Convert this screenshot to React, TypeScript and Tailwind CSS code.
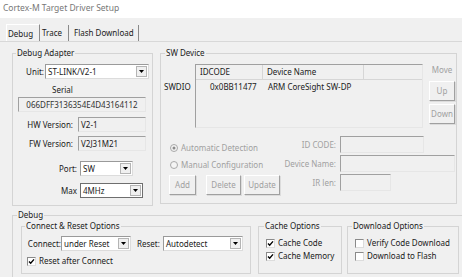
import React from 'react'

const sunken =
  'border border-t-[#a0a0a0] border-l-[#a0a0a0] border-r-[#e6e6e6] border-b-[#e6e6e6]'

function Arrow() {
  return (
    <svg width="5" height="3" viewBox="0 0 5 3">
      <path d="M0 0h5L2.5 3z" fill="#000" />
    </svg>
  )
}

function Select({ w, text, focus }: { w: string; text: string; focus?: boolean }) {
  return (
    <div
      className={`flex h-[15px] ${w} bg-white border ${
        focus
          ? 'border-[#6e6e6e]'
          : 'border-t-[#9a9a9a] border-l-[#9a9a9a] border-r-[#dcdcdc] border-b-[#dcdcdc]'
      }`}
    >
      <span className="flex-1 pl-[2px] leading-[13px] whitespace-nowrap overflow-hidden">{text}</span>
      <span className="flex items-center justify-center w-[11px] my-[1px] mr-[1px] border border-[#b4b4b4] bg-[#f0f0f0]">
        <Arrow />
      </span>
    </div>
  )
}

function Check({ on }: { on?: boolean }) {
  return (
    <span className="flex items-center justify-center w-[9px] h-[9px] bg-white border border-t-[#8a8a8a] border-l-[#8a8a8a] border-r-[#dcdcdc] border-b-[#dcdcdc]">
      {on && (
        <svg width="7" height="7" viewBox="0 0 7 7">
          <path d="M1 3.4l1.7 1.8L6 1.4" stroke="#000" strokeWidth="1.4" fill="none" />
        </svg>
      )}
    </span>
  )
}

function Radio({ on }: { on?: boolean }) {
  return (
    <svg width="8" height="8" viewBox="0 0 8 8">
      <circle cx="4" cy="4" r="3.5" fill="#f4f4f4" stroke="#a8a8a8" />
      {on && <circle cx="4" cy="4" r="1.5" fill="#8a8a8a" />}
    </svg>
  )
}

function Btn({ w, children }: { w: string; children: React.ReactNode }) {
  return (
    <div
      className={`${w} h-[20px] flex items-center justify-center text-[#a0a0a0] bg-[#f0f0f0] border border-t-white border-l-white border-r-[#a0a0a0] border-b-[#a0a0a0] shadow-[1px_1px_0_#dcdcdc]`}
    >
      {children}
    </div>
  )
}

export default function App() {
  return (
    <div className="w-[462px] h-[277px] overflow-hidden bg-[#f0f0f0] text-[8px] leading-[12px] text-[#1a1a1a] font-['Noto_Sans',sans-serif]">
      {/* title bar */}
      <div className="h-[18px] bg-white pl-[3px] pt-[2px] text-[8.5px] text-[#777]">
        Cortex-M Target Driver Setup
      </div>

      {/* tabs */}
      <div className="flex items-end h-[23px] pl-[6px]">
        <div className="h-[17px] w-[34px] pl-[1px] leading-[17px] border-t border-l border-r border-t-white border-l-white border-r-[#8a8a8a]">
          Debug
        </div>
        <div className="h-[16px] w-[29px] pl-[2px] leading-[16px] border-r border-[#8a8a8a]">Trace</div>
        <div className="h-[16px] w-[70px] pl-[5px] leading-[16px] border-r border-[#8a8a8a]">Flash Download</div>
      </div>

      <div className="border-t border-[#d8d8d8] pt-[5px] pl-[12px]">
        <div className="flex items-start">
          {/* Debug Adapter */}
          <fieldset className="w-[141px] h-[159px] border border-[#d4d4d4]">
            <legend className="ml-[3px] px-[1px]">Debug Adapter</legend>
            <div className="flex items-center h-[15px] mt-[5px]">
              <span className="w-[32px] text-right pr-[1px]">Unit:</span>
              <Select w="w-[104px]" text="ST-LINK/V2-1" />
            </div>
            <div className="mt-[5px] pl-[39px]">Serial</div>
            <div className={`mt-[1px] ml-[5px] w-[128px] h-[15px] leading-[13px] text-center text-[#333] ${sunken}`}>
              066DFF3136354E4D43164112
            </div>
            <div className="flex items-center h-[15px] mt-[5px]">
              <span className="w-[62px] text-right pr-[2px]">HW Version:</span>
              <span className={`ml-[3px] w-[68px] h-[15px] pl-[2px] leading-[13px] ${sunken}`}>V2-1</span>
            </div>
            <div className="flex items-center h-[15px] mt-[4px]">
              <span className="w-[62px] text-right pr-[2px]">FW Version:</span>
              <span className={`ml-[3px] w-[68px] h-[15px] pl-[2px] leading-[13px] ${sunken}`}>V2J31M21</span>
            </div>
            <div className="flex items-center h-[15px] mt-[10px]">
              <span className="w-[65px] text-right pr-[1px]">Port:</span>
              <span className="ml-[2px]">
                <Select w="w-[53px]" text="SW" />
              </span>
            </div>
            <div className="flex items-center h-[15px] mt-[7px]">
              <span className="w-[65px] text-right pr-[1px]">Max</span>
              <span className="ml-[2px]">
                <Select w="w-[63px]" text="4MHz" focus />
              </span>
            </div>
          </fieldset>

          {/* SW Device */}
          <fieldset className="ml-[7px] w-[297px] h-[157px] border border-[#d4d4d4]">
            <legend className="ml-[4px] px-[1px]">SW Device</legend>
            <div className="flex items-start mt-[5px]">
              <span className="w-[34px] pl-[3px] pt-[17px]">SWDIO</span>
              <div className={`w-[228px] h-[64px] bg-[#f0f0f0] ${sunken}`}>
                <div className="flex h-[15px] leading-[14px] border-b border-[#d6d6d6]">
                  <span className="w-[67px] pl-[4px] border-r border-[#d6d6d6]">IDCODE</span>
                  <span className="w-[101px] pl-[4px] border-r border-[#d6d6d6]">Device Name</span>
                </div>
                <div className="flex pt-[1px]">
                  <span className="w-[67px] pl-[14px]">0x0BB11477</span>
                  <span className="pl-[5px]">ARM CoreSight SW-DP</span>
                </div>
              </div>
              <div className="ml-[6px] w-[26px] flex flex-col items-center text-[#a0a0a0]">
                <span>Move</span>
                <div className="mt-[5px]">
                  <Btn w="w-[26px]">Up</Btn>
                </div>
                <div className="mt-[3px]">
                  <Btn w="w-[26px]">Down</Btn>
                </div>
              </div>
            </div>
            <div className="flex">
              <div className="w-[119px] text-[#a0a0a0]">
                <div className="flex items-center gap-[3px] h-[12px] mt-[14px] pl-[9px] whitespace-nowrap">
                  <Radio on />
                  Automatic Detection
                </div>
                <div className="flex items-center gap-[3px] h-[12px] mt-[5px] pl-[9px] whitespace-nowrap">
                  <Radio />
                  Manual Configuration
                </div>
                <div className="flex mt-[4px] pl-[8px]">
                  <Btn w="w-[36px]">Add</Btn>
                  <span className="ml-[10px]">
                    <Btn w="w-[35px]">Delete</Btn>
                  </span>
                  <span className="ml-[3px]">
                    <Btn w="w-[36px]">Update</Btn>
                  </span>
                </div>
              </div>
              <div className="text-[#a0a0a0] mt-[8px]">
                <div className="flex items-center h-[17px]">
                  <span className="w-[56px] text-right whitespace-nowrap">ID CODE:</span>
                  <span className={`ml-[4px] w-[84px] h-[17px] ${sunken}`} />
                </div>
                <div className="flex items-center h-[17px] mt-[2px]">
                  <span className="w-[56px] text-right whitespace-nowrap">Device Name:</span>
                  <span className={`ml-[4px] w-[115px] h-[17px] ${sunken}`} />
                </div>
                <div className="flex items-center h-[17px] mt-[2px]">
                  <span className="w-[56px] text-right whitespace-nowrap">IR len:</span>
                  <span className={`ml-[4px] w-[51px] h-[17px] ${sunken}`} />
                </div>
              </div>
            </div>
          </fieldset>
        </div>

        {/* Debug */}
        <fieldset className="mt-[3px] w-[460px] h-[80px] border border-[#d4d4d4]">
          <legend className="ml-[4px] px-[1px]">Debug</legend>
          <div className="flex items-start mt-[-1px]">
            <fieldset className="ml-[8px] w-[230px] h-[54px] border border-[#d4d4d4]">
              <legend className="ml-[3px] px-[1px]">Connect &amp; Reset Options</legend>
              <div className="flex items-center h-[15px] mt-[4px]">
                <span className="w-[39px] text-right">Connect:</span>
                <Select w="w-[70px]" text="under Reset" />
                <span className="ml-[6px] w-[25px]">Reset:</span>
                <span className="ml-[1px]">
                  <Select w="w-[80px]" text="Autodetect" />
                </span>
              </div>
              <div className="flex items-center gap-[3px] h-[12px] mt-[4px] pl-[5px]">
                <Check on />
                Reset after Connect
              </div>
            </fieldset>
            <fieldset className="ml-[7px] w-[84px] h-[54px] border border-[#d4d4d4]">
              <legend className="ml-[5px] px-[1px]">Cache Options</legend>
              <div className="flex items-center gap-[3px] h-[12px] mt-[5px] pl-[7px]">
                <Check on />
                Cache Code
              </div>
              <div className="flex items-center gap-[3px] h-[12px] mt-[1px] pl-[7px]">
                <Check on />
                Cache Memory
              </div>
            </fieldset>
            <fieldset className="ml-[5px] w-[112px] h-[54px] border border-[#d4d4d4]">
              <legend className="ml-[4px] px-[1px]">Download Options</legend>
              <div className="flex items-center gap-[3px] h-[12px] mt-[5px] pl-[7px] whitespace-nowrap">
                <Check />
                Verify Code Download
              </div>
              <div className="flex items-center gap-[3px] h-[12px] mt-[1px] pl-[7px] whitespace-nowrap">
                <Check />
                Download to Flash
              </div>
            </fieldset>
          </div>
        </fieldset>
      </div>
    </div>
  )
}
